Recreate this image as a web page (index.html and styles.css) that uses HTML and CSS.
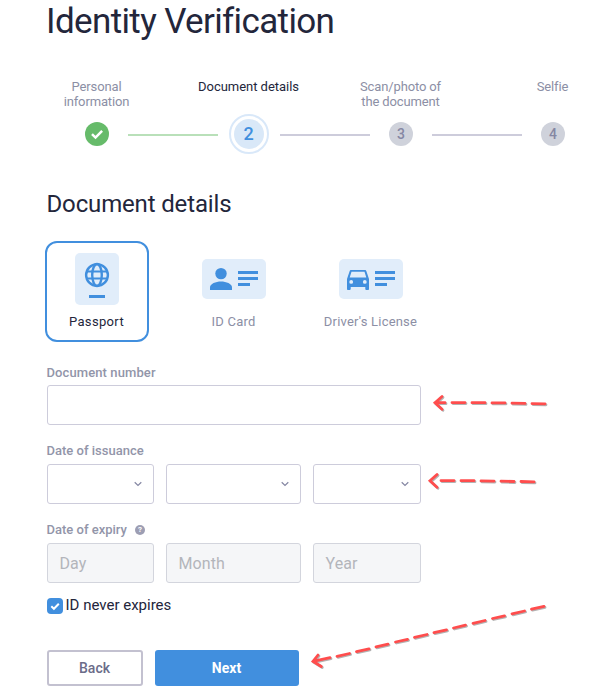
FILE: index.html
```html
<!DOCTYPE html>
<html lang="en">
<head>
<meta charset="utf-8">
<title>Identity Verification</title>
<link rel="stylesheet" href="styles.css">
</head>
<body>
<main class="page">
  <h1 class="title">Identity Verification</h1>

  <ol class="stepper">
    <li class="step done">
      <span class="step-label">Personal<br>information</span>
      <span class="step-row"><span class="dot"><svg width="24" height="24" viewBox="0 0 24 24"><path d="M7 12.2l3.5 3.4 6.6-6.8" fill="none" stroke="#fff" stroke-width="2.5"/></svg></span></span>
    </li>
    <li class="step current">
      <span class="step-label">Document details</span>
      <span class="step-row"><span class="ring"><span class="dot">2</span></span></span>
    </li>
    <li class="step">
      <span class="step-label">Scan/photo of<br>the document</span>
      <span class="step-row"><span class="dot">3</span></span>
    </li>
    <li class="step">
      <span class="step-label">Selfie</span>
      <span class="step-row"><span class="dot">4</span></span>
    </li>
  </ol>

  <h2 class="subtitle">Document details</h2>

  <div class="docs">
    <div class="doc selected">
      <span class="doc-icon">
        <svg width="44" height="52" viewBox="0 0 44 52">
          <rect width="44" height="52" rx="5" fill="#e1edfa"/>
          <g fill="none" stroke="#418fde" stroke-width="2.400">
            <circle cx="22" cy="22" r="10.900"/>
            <ellipse cx="22" cy="22" rx="4.800" ry="11"/>
            <path d="M12 18.500h20M12 25.500h20" stroke-width="2"/>
          </g>
          <rect x="14" y="42" width="16" height="3" fill="#418fde"/>
        </svg>
      </span>
      <span class="doc-name">Passport</span>
    </div>
    <div class="doc">
      <span class="doc-icon">
        <svg width="64" height="40" viewBox="0 0 64 40">
          <rect width="64" height="40" rx="5" fill="#e1edfa"/>
          <g fill="#418fde">
            <circle cx="19" cy="14.600" r="5.700"/>
            <path d="M8 31v-2.600c0-3.700 5.800-5.900 11-5.900s11 2.200 11 5.900V31z"/>
            <path d="M36 12h20v3H36zM36 18h20v3H36zM36 24h12v3H36z"/>
          </g>
        </svg>
      </span>
      <span class="doc-name">ID Card</span>
    </div>
    <div class="doc">
      <span class="doc-icon">
        <svg width="64" height="40" viewBox="0 0 64 40">
          <rect width="64" height="40" rx="5" fill="#e1edfa"/>
          <g fill="#418fde">
            <path fill-rule="evenodd" d="M12.200 11h13.600c.8 0 1.400.5 1.600 1.200L30 20v10c0 .6-.5 1-1 1h-1.500c-.7 0-1.200-.5-1.200-1v-2H11.700v2c0 .5-.5 1-1.200 1H9c-.5 0-1-.4-1-1V20l2.600-7.800c.2-.7.8-1.200 1.600-1.200zM12.500 12.700L10.700 18.500h16.600L25.500 12.700zM12.200 21a1.900 1.900 0 1 0 0 3.800 1.900 1.900 0 0 0 0-3.800zM25.800 21a1.900 1.900 0 1 0 0 3.800 1.900 1.900 0 0 0 0-3.800z"/>
            <path d="M36 12h20v3H36zM36 18h20v3H36zM36 24h12v3H36z"/>
          </g>
        </svg>
      </span>
      <span class="doc-name">Driver's License</span>
    </div>
  </div>

  <form class="form">
    <div class="label">Document number</div>
    <div class="box"></div>

    <div class="label">Date of issuance</div>
    <div class="row">
      <div class="box select"><svg width="8" height="6" viewBox="0 0 8 6"><path d="M.7 1.200L4 4.400l3.300-3.200"/></svg></div>
      <div class="box select"><svg width="8" height="6" viewBox="0 0 8 6"><path d="M.7 1.200L4 4.400l3.300-3.200"/></svg></div>
      <div class="box select"><svg width="8" height="6" viewBox="0 0 8 6"><path d="M.7 1.200L4 4.400l3.300-3.200"/></svg></div>
    </div>

    <div class="label expiry">Date of expiry <span class="help">?</span></div>
    <div class="row">
      <div class="box disabled">Day</div>
      <div class="box disabled">Month</div>
      <div class="box disabled">Year</div>
    </div>

    <div class="check">
      <svg width="16" height="16" viewBox="0 0 16 16"><rect width="16" height="16" rx="4" fill="#418fde"/><path d="M4.300 8.300l2.600 2.500 4.900-5" fill="none" stroke="#fff" stroke-width="2"/></svg>
      <span>ID never expires</span>
    </div>

    <div class="actions">
      <button type="button" class="btn back">Back</button>
      <button type="button" class="btn next">Next</button>
    </div>
  </form>
</main>

<svg class="arrows" width="607" height="698" viewBox="0 0 607 698">
  <g class="head">
    <path d="M442 396.500L435 402.700L442 409.200M435 402.700L445 402.700"/>
    <path d="M437 474.500L430 480.800L437 487.300"/>
    <path d="M318 655L313 661.300L321.300 666.500M313 661.300L330 657.700"/>
  </g>
  <g class="dash">
    <path d="M452 402.600h13M472 402.700h13M492 402.900h13M512 403.200l13 .2M532 403.600l13 .2"/>
    <path d="M441 480.600h13M461 480.700h13M481 480.900l13 .2M501 481.200l13 .3M521 481.500l13 .4"/>
    <path d="M337 656.300l12.500-2.800M356.500 651.600l12.500-2.800M376 646.900l12-2.700M395.500 642l12-2.700M414.500 637.400l12.500-2.900M434 632.700l12.500-2.900M453.500 628l12-2.800M473 623.300l12-2.800M492.500 618.500l12-2.700M512 613.800l12.500-2.800M531.500 609.200l12.500-2.900"/>
  </g>
</svg>
</body>
</html>
```
FILE: styles.css
```css
* { box-sizing: border-box; }

body {
  margin: 0;
  height: 698px;
  overflow: hidden;
  position: relative;
  background: #fff;
  color: #23263b;
  font-family: Roboto, "Liberation Sans", sans-serif;
}

.page { padding-left: 47px; }

.title {
  margin: 0 0 0 -1px;
  padding-top: 1px;
  height: 43px;
  line-height: 42px;
  font-size: 35px;
  font-weight: 400;
  letter-spacing: -.63px;
}

.stepper {
  display: flex;
  width: 608px;
  margin: 36px 0 0 -26px;
  padding: 0;
  list-style: none;
}

.step {
  display: flex;
  flex-direction: column;
  flex: 0 0 152px;
  text-align: center;
  color: #8c8fa5;
}

.step-label {
  height: 35px;
  margin-left: -1px;
  font-size: 13px;
  line-height: 15px;
  letter-spacing: -.13px;
}

.current .step-label { color: #23263b; letter-spacing: -.03px; }

.step-row {
  display: flex;
  align-items: center;
  height: 40px;
}

.step-row::before,
.step-row::after {
  content: "";
  flex: 0 0 45px;
  height: 2px;
  margin-top: 2px;
  background: #cdccdb;
}

.step-row::before { margin-right: auto; }
.step-row::after { margin-left: auto; }
.step:first-child .step-row::before,
.step:last-child .step-row::after { background: none; }
.done .step-row::after,
.current .step-row::before { background: #b9e0b9; }

.dot {
  display: flex;
  align-items: center;
  justify-content: center;
  width: 24px;
  height: 24px;
  border-radius: 50%;
  background: #cfd2db;
  color: #8587a3;
  font-size: 14px;
  font-weight: 500;
}

.done .dot { background: #66bb6a; }

.ring {
  display: flex;
  align-items: center;
  justify-content: center;
  width: 40px;
  height: 40px;
  border: 2px solid #d9e8f9;
  border-radius: 50%;
}

.ring .dot {
  width: 30px;
  height: 30px;
  padding: 0 1px 1px 0;
  background: #d9e8f8;
  color: #418fde;
  font-size: 18px;
}

.subtitle {
  margin: 34px 0 0 -.5px;
  height: 32px;
  line-height: 32px;
  font-size: 24px;
  font-weight: 400;
  letter-spacing: -.15px;
}

.docs {
  display: flex;
  gap: 33px;
  margin: 21px 0 0 -2px;
}

.doc {
  display: flex;
  flex-direction: column;
  align-items: center;
  width: 104px;
  height: 101px;
  padding-top: 10px;
  border: 2px solid transparent;
  border-radius: 12px;
  color: #8c8fa5;
}

.doc.selected { border-color: #418fde; color: #23263b; }

.doc-icon {
  display: flex;
  align-items: center;
  height: 52px;
}

.doc-name {
  margin: 8px 1px 0 0;
  font-size: 13px;
  line-height: 17px;
  letter-spacing: .2px;
  white-space: nowrap;
}

.doc.selected .doc-name { letter-spacing: .35px; }

.form { width: 374px; margin-top: 22px; }

.label {
  height: 17px;
  margin: 0 0 4px;
  line-height: 17px;
  font-size: 13px;
  font-weight: 500;
  color: #9295a9;
  text-indent: -.5px;
  letter-spacing: .1px;
}

.box {
  height: 40px;
  border: 1px solid #cdccdb;
  border-radius: 3px;
}

.box + .label { margin: 17px 0 5px; letter-spacing: 0; }

.row {
  display: grid;
  grid-template-columns: 107px 135px 108px;
  gap: 12px;
}

.select {
  display: flex;
  align-items: center;
  justify-content: flex-end;
  padding-right: 11px;
}

.select path { fill: none; stroke: #8587a3; stroke-width: 1.2; }

.expiry {
  display: flex;
  align-items: center;
  gap: 8px;
  margin: 17px 0 5px;
  letter-spacing: 0;
}

.help {
  width: 10px;
  height: 10px;
  border-radius: 50%;
  background: #9d9eb3;
  color: #fff;
  font-size: 8px;
  font-weight: 700;
  line-height: 10px;
  text-align: center;
  text-indent: 0;
}

.disabled {
  padding-left: 11.5px;
  border-color: #d3d5dd;
  background: #f5f6f8;
  color: #b3b5bb;
  font-size: 16px;
  line-height: 39px;
  letter-spacing: .1px;
}

.check {
  display: flex;
  align-items: center;
  gap: 2.5px;
  height: 20px;
  margin-top: 13px;
  font-size: 15px;
}

.check span { margin-top: -2px; }

.actions {
  display: flex;
  gap: 12px;
  margin-top: 34px;
}

.btn {
  height: 36px;
  padding: 0 1px 0 0;
  border: 0;
  border-radius: 3px;
  font: 500 14px/32px Roboto, "Liberation Sans", sans-serif;
}

.back {
  width: 96px;
  border: 2px solid #c3c1d0;
  background: #fff;
  color: #6b6c89;
}

.next {
  width: 144px;
  background: #418fde;
  color: #fff;
  font-weight: 700;
}

.arrows {
  position: absolute;
  top: 0;
  left: 0;
  pointer-events: none;
  fill: none;
  stroke: #ff4d4d;
  stroke-width: 2.8;
  stroke-linecap: round;
  filter: drop-shadow(1px 1px .4px rgba(0, 0, 0, .3));
}
```
